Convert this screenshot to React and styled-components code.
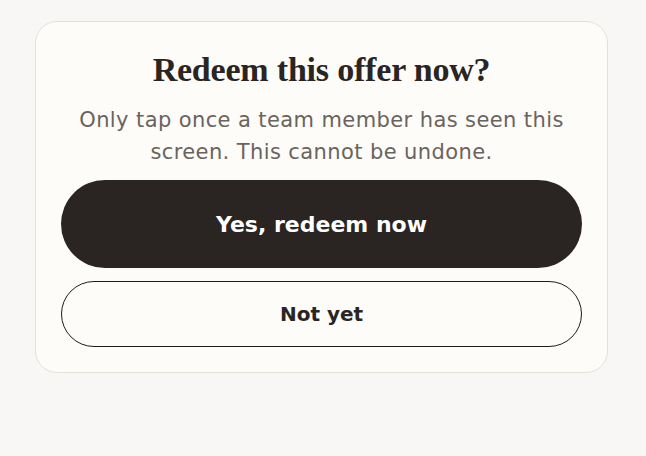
import React from "react"
import styled, { createGlobalStyle } from "styled-components"

const GlobalStyle = createGlobalStyle`
  html, body {
    margin: 0;
    padding: 0;
    background: #f8f7f5;
  }
`

const Page = styled.div`
  width: 646px;
  height: 456px;
  padding: 21px 38px 0 35px;
  box-sizing: border-box;
`

const Card = styled.div`
  box-sizing: border-box;
  width: 573px;
  background: #fdfcf9;
  border: 1px solid #e4e1dc;
  border-radius: 22px;
  padding: 28px 25px 25px;
  display: flex;
  flex-direction: column;
  align-items: stretch;
`

const Title = styled.h2`
  margin: 0;
  font-family: "Liberation Serif", "DejaVu Serif", serif;
  font-weight: 700;
  font-size: 34px;
  line-height: 40px;
  letter-spacing: -0.2px;
  color: #2a2522;
  text-align: center;
`

const Body = styled.p`
  margin: 14px 0 0;
  font-family: "DejaVu Sans", "Open Sans", sans-serif;
  font-size: 21px;
  line-height: 32px;
  letter-spacing: 0.4px;
  color: #6b635d;
  text-align: center;
`

const Actions = styled.div`
  display: flex;
  flex-direction: column;
  gap: 13px;
  margin-top: 12px;
`

const Button = styled.button`
  box-sizing: border-box;
  width: 100%;
  height: ${p => (p.$primary ? "88px" : "66px")};
  border-radius: 999px;
  border: ${p => (p.$primary ? "none" : "1.5px solid #1f1b18")};
  background: ${p => (p.$primary ? "#2a2522" : "transparent")};
  color: ${p => (p.$primary ? "#ffffff" : "#2a2522")};
  font-family: "DejaVu Sans", "Open Sans", sans-serif;
  font-weight: 700;
  font-size: ${p => (p.$primary ? "22px" : "20px")};
  cursor: pointer;
`

export default function App() {
  return (
    <>
      <GlobalStyle />
      <Page>
        <Card>
          <Title>Redeem this offer now?</Title>
          <Body>Only tap once a team member has seen this screen. This cannot be undone.</Body>
          <Actions>
            <Button $primary>Yes, redeem now</Button>
            <Button>Not yet</Button>
          </Actions>
        </Card>
      </Page>
    </>
  )
}
